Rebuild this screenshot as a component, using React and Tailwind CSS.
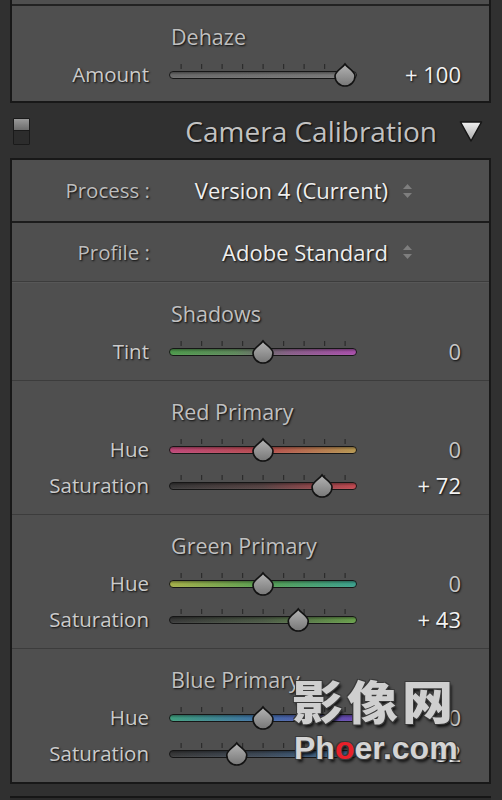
import React from "react";

const TS = "[text-shadow:1px_1px_2px_rgba(0,0,0,0.9)]";

function Slider({ id, stops, value }) {
  const cx = 12 + ((value + 100) / 200) * 164;
  const ticks = [0, 1, 2, 3, 4, 5, 6, 7, 8].map((i) => 12 + i * 20.5);
  return (
    <svg width="188" height="36" viewBox="0 0 188 36" className="block overflow-visible">
      <defs>
        <linearGradient id={`g-${id}`} x1="0" x2="1" y1="0" y2="0">
          {stops.map(([o, c]) => (
            <stop key={o} offset={o} stopColor={c} />
          ))}
        </linearGradient>
        <linearGradient id={`sh-${id}`} x1="0" x2="0" y1="0" y2="1">
          <stop offset="0" stopColor="rgba(0,0,0,0.35)" />
          <stop offset="0.5" stopColor="rgba(0,0,0,0)" />
          <stop offset="1" stopColor="rgba(255,255,255,0.08)" />
        </linearGradient>
        <linearGradient id={`t-${id}`} x1="0" x2="0" y1="0" y2="1">
          <stop offset="0" stopColor="#b4b4b4" />
          <stop offset="1" stopColor="#777777" />
        </linearGradient>
      </defs>
      {ticks.map((x) => (
        <rect key={x} x={x - 0.5} y={8} width={1.2} height={5} fill="#2c2c2c" />
      ))}
      <rect x="0.5" y="15.5" width="187" height="7" rx="3.5" fill={`url(#g-${id})`} stroke="#161616" />
      <rect x="1" y="16" width="186" height="6" rx="3" fill={`url(#sh-${id})`} />
      <path
        transform={`translate(${cx} 20)`}
        d="M0 -12 C2.5 -8 10 -5 10 0 A10 10 0 0 1 -10 0 C-10 -5 -2.5 -8 0 -12 Z"
        fill={`url(#t-${id})`}
        stroke="#121212"
        strokeWidth="1.6"
      />
    </svg>
  );
}

function Row({ label, id, stops, value }) {
  const txt = value === 0 ? "0" : value > 0 ? `+ ${value}` : `- ${Math.abs(value)}`;
  return (
    <div className="flex h-[36px] items-center">
      <div className={`w-[137px] text-right text-[20.5px] text-[#cbcbcb] ${TS}`}>{label}</div>
      <div className="ml-[20px] w-[188px]">
        <Slider id={id} stops={stops} value={value} />
      </div>
      <div
        className={`flex-1 pr-[28px] text-right text-[22px] ${TS} ${
          value === 0 ? "text-[#c6c6c6]" : "text-[#f2f2f2]"
        }`}
      >
        {txt}
      </div>
    </div>
  );
}

function Section({ title, rows, border = true }) {
  return (
    <div className={`pt-[18px] pb-[11px] ${border ? "border-t border-[#3c3c3c]" : ""}`}>
      <div className={`h-[26px] pl-[159px] text-[21.5px] leading-[26px] text-[#c0c0c0] ${TS}`}>{title}</div>
      <div className="mt-[6px]">
        {rows.map((r) => (
          <Row key={r.id} {...r} />
        ))}
      </div>
    </div>
  );
}

function Stepper() {
  return (
    <svg width="11" height="16" viewBox="0 0 11 16" className="block">
      <path d="M5.5 1 L10 6 L1 6 Z" fill="#7e7e7e" />
      <path d="M5.5 15 L10 10 L1 10 Z" fill="#7e7e7e" />
    </svg>
  );
}

function MenuRow({ label, value, h }) {
  return (
    <div className={`flex items-center ${h}`}>
      <div className={`w-[138px] text-right text-[20.5px] text-[#bdbdbd] ${TS}`}>{label}</div>
      <div className={`w-[238px] text-right text-[22px] text-[#eeeeee] ${TS}`}>{value}</div>
      <div className="ml-[14px]">
        <Stepper />
      </div>
    </div>
  );
}

const GRAY = [
  [0, "#6a6a6a"],
  [1, "#7a7a7a"],
];

export default function App() {
  return (
    <div className="relative h-[800px] w-[502px] overflow-hidden bg-[#303030] font-['Open_Sans','Noto_Sans',sans-serif]">
      <div className="ml-[10px] mr-[11px]">
        {/* Effects panel bottom (Dehaze) */}
        <div className="border-x-2 border-b-2 border-[#181818] bg-[#4f4f4f]">
          <div className="h-[4px]" />
          <div className="h-[2px] bg-[#222222]" />
          <div className="pt-[18px] pb-[9px]">
            <div className={`h-[26px] pl-[159px] text-[21.5px] leading-[26px] text-[#c0c0c0] ${TS}`}>Dehaze</div>
            <div className="mt-[6px]">
              <Row label="Amount" id="dehaze" stops={GRAY} value={100} />
            </div>
          </div>
        </div>

        {/* Header */}
        <div className="flex h-[55px] items-center">
          <div className="ml-[3px] mt-[2px] flex h-[27px] w-[17px] flex-col overflow-hidden rounded-[1px] border border-[#1a1a1a]">
            <div className="h-[11px] bg-gradient-to-b from-[#9a9a9a] to-[#6c6c6c]" />
            <div className="flex-1 border-t border-[#1a1a1a] bg-[#2c2c2c]" />
          </div>
          <div className={`flex-1 pr-[22px] text-right text-[28px] leading-none text-[#c2c2c2] ${TS}`}>
            Camera Calibration
          </div>
          <svg width="24" height="22" viewBox="0 0 24 22" className="mr-[8px] block">
            <defs>
              <linearGradient id="tri" x1="0" x2="0" y1="0" y2="1">
                <stop offset="0" stopColor="#f0f0f0" />
                <stop offset="1" stopColor="#a8a8a8" />
              </linearGradient>
            </defs>
            <path d="M1.5 2 L22.5 2 L12 21 Z" fill="url(#tri)" stroke="#151515" strokeWidth="1.5" strokeLinejoin="round" />
          </svg>
        </div>

        {/* Camera Calibration panel */}
        <div className="border-2 border-[#181818] bg-[#4f4f4f]">
          <MenuRow label="Process :" value="Version 4 (Current)" h="h-[61px]" />
          <div className="h-[2px] bg-[#1c1c1c]" />
          <MenuRow label="Profile :" value="Adobe Standard" h="h-[58px]" />
          <div className="h-[1px] bg-[#3c3c3c]" />
          <div className="h-[1px] bg-[#575757]" />
          <Section
            border={false}
            title="Shadows"
            rows={[
              {
                label: "Tint",
                id: "tint",
                value: 0,
                stops: [
                  [0, "#4e9b4c"],
                  [0.35, "#5f8a5c"],
                  [0.5, "#6c6c6c"],
                  [0.65, "#8a5f8a"],
                  [1, "#aa4fac"],
                ],
              },
            ]}
          />
          <Section
            title="Red Primary"
            rows={[
              {
                label: "Hue",
                id: "rh",
                value: 0,
                stops: [
                  [0, "#c0487a"],
                  [0.5, "#b84c4e"],
                  [1, "#b89a52"],
                ],
              },
              {
                label: "Saturation",
                id: "rs",
                value: 72,
                stops: [
                  [0, "#383838"],
                  [0.5, "#574444"],
                  [1, "#c44a52"],
                ],
              },
            ]}
          />
          <Section
            title="Green Primary"
            rows={[
              {
                label: "Hue",
                id: "gh",
                value: 0,
                stops: [
                  [0, "#a8b24a"],
                  [0.5, "#58a052"],
                  [1, "#3ca290"],
                ],
              },
              {
                label: "Saturation",
                id: "gs",
                value: 43,
                stops: [
                  [0, "#383838"],
                  [0.5, "#4c5a46"],
                  [1, "#6aa24c"],
                ],
              },
            ]}
          />
          <Section
            title="Blue Primary"
            rows={[
              {
                label: "Hue",
                id: "bh",
                value: 0,
                stops: [
                  [0, "#3fa07e"],
                  [0.5, "#3f6ea8"],
                  [1, "#6a46b2"],
                ],
              },
              {
                label: "Saturation",
                id: "bs",
                value: -32,
                stops: [
                  [0, "#383838"],
                  [0.5, "#3e4a58"],
                  [1, "#3a6a9c"],
                ],
              },
            ]}
          />
        </div>
        <div className="mt-[12px] h-[20px] border-t-2 border-[#161616] bg-[#2a2a2a]" />
      </div>

      {/* Watermark */}
      <div className="pointer-events-none absolute left-[292px] top-[673px] select-none">
        <div className="origin-top-left scale-y-[0.9] text-[51px] font-black leading-[58px] tracking-[4px] text-[#cfcfcf] font-['Noto_Sans_CJK_SC',sans-serif] [text-shadow:-1px_-1px_0_#3a3a3a,1px_-1px_0_#3a3a3a,-1px_1px_0_#3a3a3a,1px_1px_0_#3a3a3a,2px_3px_3px_rgba(0,0,0,0.8)]">
          影像网
        </div>
        <div className="ml-[2px] mt-[0px] text-[32px] font-bold leading-[34px] text-[#d4d4d4] font-['Liberation_Sans',sans-serif] [text-shadow:-1px_-1px_0_#3a3a3a,1px_-1px_0_#3a3a3a,-1px_1px_0_#3a3a3a,1px_1px_0_#3a3a3a,2px_3px_3px_rgba(0,0,0,0.8)]">
          Ph<span className="text-[#e8202a]">o</span>er.com
        </div>
      </div>
    </div>
  );
}
